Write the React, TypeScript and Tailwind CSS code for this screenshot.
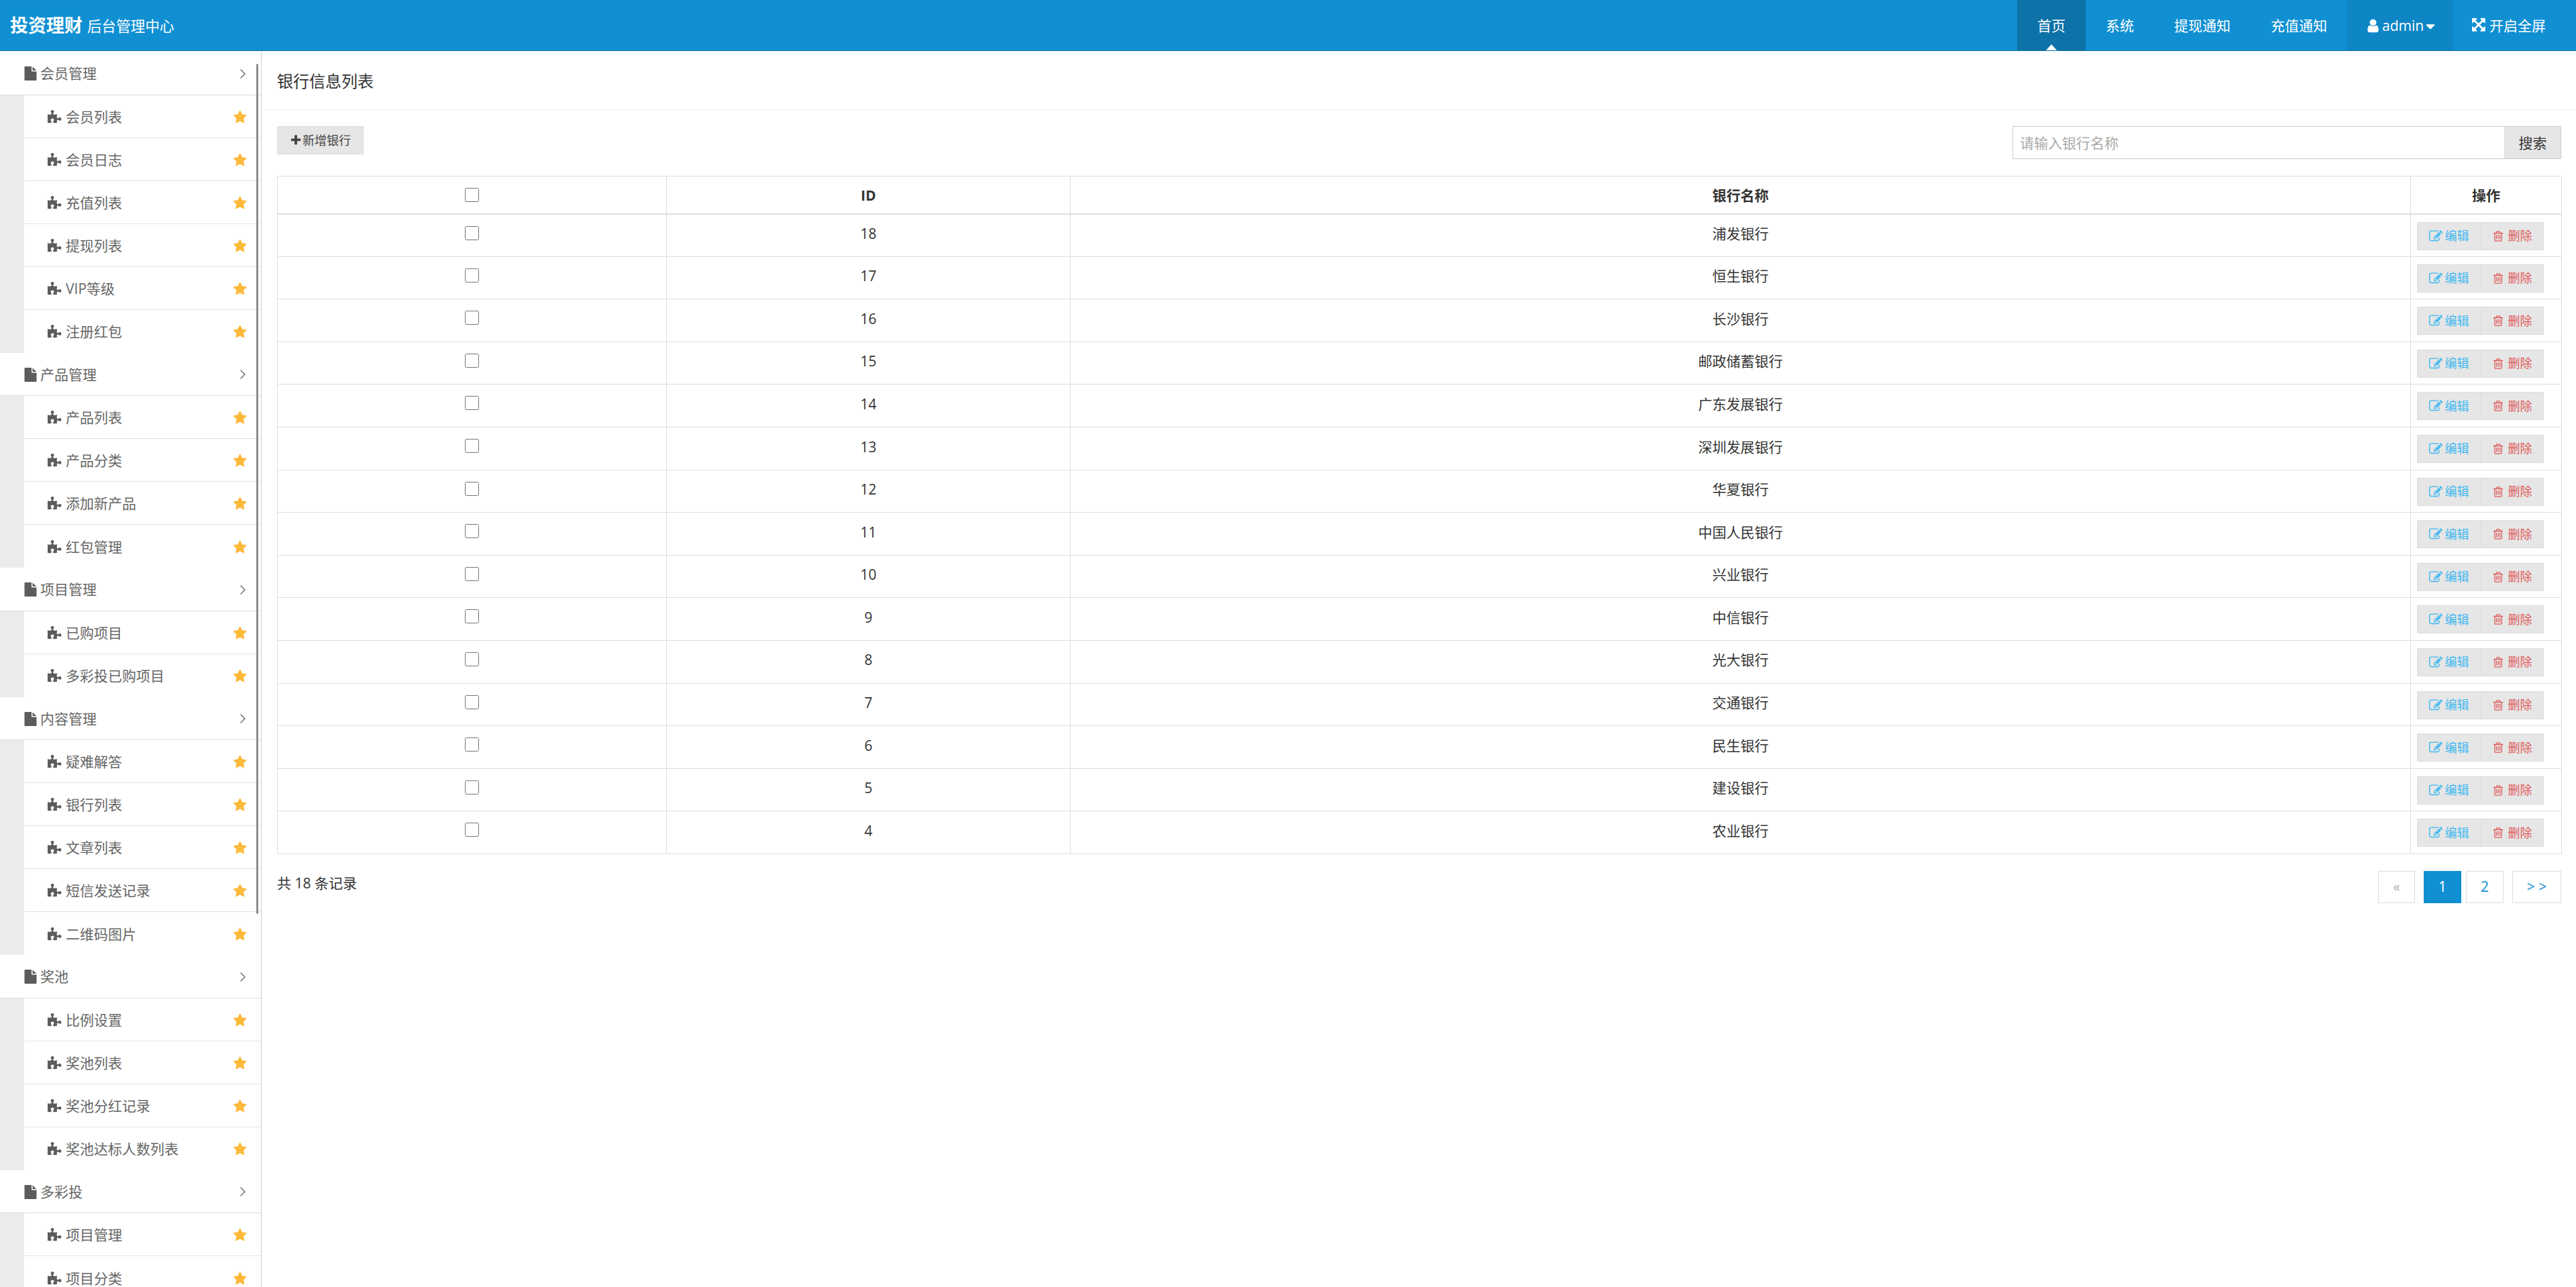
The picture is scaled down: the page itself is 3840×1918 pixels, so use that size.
import { ChevronRight } from "lucide-react";
import { FaCaretDown } from "react-icons/fa";

const fontStack = "font-['Open_Sans','Noto_Sans_CJK_SC',sans-serif]";

// font-awesome 4 glyphs, the 5 set in react-icons has different shapes
const glyphs = {
  file: "M1596 476q14 14 28 36h-472v-472q22 14 36 28zm-476 164h544v1056q0 40-28 68t-68 28h-1344q-40 0-68-28t-28-68v-1600q0-40 28-68t68-28h800v544q0 40 28 68t68 28z",
  puzzle:
    "M1664 1098q0 81-44.5 135t-123.5 54q-41 0-77.5-17.5t-59-38-56.5-38-71-17.5q-110 0-110 124 0 39 16 115t15 115v5q-22 0-33 1-34 3-97.5 11.5t-115.5 13.5-98 5q-61 0-103-26.5t-42-83.5q0-37 17.5-71t38-56.5 38-59 17.5-77.5q0-79-54-123.5t-135-44.5q-84 0-143 45.5t-59 127.5q0 43 15 83t33.5 64.5 33.5 53 15 50.5q0 45-46 89-37 35-117 35-95 0-245-24-9-2-27.5-4t-27.5-4l-13-2q-1 0-3-1-2 0-2-1v-1024q2 1 17.5 3.5t34 5 21.5 3.5q150 24 245 24 80 0 117-35 46-44 46-89 0-22-15-50.5t-33.5-53-33.5-64.5-15-83q0-82 59-127.5t144-45.5q80 0 134 44.5t54 123.5q0 41-17.5 77.5t-38 59-38 56.5-17.5 71q0 57 42 83.5t103 26.5q64 0 180-15t163-17v2q-1 2-3.5 17.5t-5 34-3.5 21.5q-24 150-24 245 0 80 35 117 44 46 89 46 22 0 50.5-15t53-33.5 64.5-33.5 83-15q82 0 127.5 59t45.5 143z",
  star: "M1728 647q0 22-26 48l-363 354 86 500q1 7 1 20 0 21-10.5 35.5t-30.5 14.5q-19 0-40-12l-449-236-449 236q-22 12-40 12-21 0-31.5-14.5t-10.5-35.5q0-6 2-20l86-500-364-354q-25-27-25-48 0-37 56-46l502-73 225-455q19-41 49-41t49 41l225 455 502 73q56 9 56 46z",
  edit: "M888 1184l116-116-152-152-116 116v56h96v96h56zm440-720q-16-16-33 1l-350 350q-17 17-1 33t33-1l350-350q17-17 1-33zm80 594v190q0 119-84.5 203.5t-203.5 84.5h-832q-119 0-203.5-84.5t-84.5-203.5v-832q0-119 84.5-203.5t203.5-84.5h832q63 0 117 25 15 7 18 23 3 17-9 29l-49 49q-14 14-32 8-23-6-45-6h-832q-66 0-113 47t-47 113v832q0 66 47 113t113 47h832q66 0 113-47t47-113v-126q0-13 9-22l64-64q15-15 35-7t20 29zm-96-738l288 288-672 672h-288v-288zm444 132l-92 92-288-288 92-92q28-28 68-28t68 28l152 152q28 28 28 68t-28 68z",
  trash:
    "M704 736v576q0 14-9 23t-23 9h-64q-14 0-23-9t-9-23v-576q0-14 9-23t23-9h64q14 0 23 9t9 23zm256 0v576q0 14-9 23t-23 9h-64q-14 0-23-9t-9-23v-576q0-14 9-23t23-9h64q14 0 23 9t9 23zm256 0v576q0 14-9 23t-23 9h-64q-14 0-23-9t-9-23v-576q0-14 9-23t23-9h64q14 0 23 9t9 23zm128 724v-948h-896v948q0 22 7 40.5t14.5 27 10.5 8.5h832q3 0 10.5-8.5t14.5-27 7-40.5zm-672-1076h448l-48-117q-7-9-17-11h-317q-10 2-17 11zm928 32v64q0 14-9 23t-23 9h-96v948q0 83-47 143.5t-113 60.5h-832q-66 0-113-58.5t-47-141.5v-952h-96q-14 0-23-9t-9-23v-64q0-14 9-23t23-9h309l70-167q15-37 54-63t79-26h320q40 0 79 26t54 63l70 167h309q14 0 23 9t9 23z",
  expand:
    "M1283 413l-355 355 355 355 144-144q29-31 70-14 39 17 39 59v448q0 26-19 45t-45 19h-448q-42 0-59-40-17-39 14-69l144-144-355-355-355 355 144 144q31 30 14 69-17 40-59 40h-448q-26 0-45-19t-19-45v-448q0-42 40-59 39-17 69 14l144 144 355-355-355-355-144 144q-19 19-45 19-12 0-24-5-40-17-40-59v-448q0-26 19-45t45-19h448q42 0 59 40 17 39-14 69l-144 144 355 355 355-355-144-144q-31-30-14-69 17-40 59-40h448q26 0 45 19t19 45v448q0 42-39 59-13 5-25 5-26 0-45-19z",
  plus: "M1600 736v192q0 40-28 68t-68 28h-416v416q0 40-28 68t-68 28h-192q-40 0-68-28t-28-68v-416h-416q-40 0-68-28t-28-68v-192q0-40 28-68t68-28h416v-416q0-40 28-68t68-28h192q40 0 68 28t28 68v416h416q40 0 68 28t28 68z",
  user: "M1536 1399q0 109-62.5 187t-150.5 78h-854q-88 0-150.5-78t-62.5-187q0-85 8.5-160.5t31.5-152 58.5-131 94-89 134.5-34.5q131 128 313 128t313-128q76 0 134.5 34.5t94 89 58.5 131 31.5 152 8.5 160.5zm-256-887q0 159-112.5 271.5t-271.5 112.5-271.5-112.5-112.5-271.5 112.5-271.5 271.5-112.5 271.5 112.5 112.5 271.5z",
};

function Fa({ name, className }: { name: keyof typeof glyphs; className: string }) {
  return (
    <svg viewBox="0 0 1792 1792" fill="currentColor" className={`shrink-0 ${className}`}>
      <path d={glyphs[name]} />
    </svg>
  );
}

const menu = [
  { title: "会员管理", items: ["会员列表", "会员日志", "充值列表", "提现列表", "VIP等级", "注册红包"] },
  { title: "产品管理", items: ["产品列表", "产品分类", "添加新产品", "红包管理"] },
  { title: "项目管理", items: ["已购项目", "多彩投已购项目"] },
  { title: "内容管理", items: ["疑难解答", "银行列表", "文章列表", "短信发送记录", "二维码图片"] },
  { title: "奖池", items: ["比例设置", "奖池列表", "奖池分红记录", "奖池达标人数列表"] },
  { title: "多彩投", items: ["项目管理", "项目分类"] },
];

const banks = [
  { id: 18, name: "浦发银行" },
  { id: 17, name: "恒生银行" },
  { id: 16, name: "长沙银行" },
  { id: 15, name: "邮政储蓄银行" },
  { id: 14, name: "广东发展银行" },
  { id: 13, name: "深圳发展银行" },
  { id: 12, name: "华夏银行" },
  { id: 11, name: "中国人民银行" },
  { id: 10, name: "兴业银行" },
  { id: 9, name: "中信银行" },
  { id: 8, name: "光大银行" },
  { id: 7, name: "交通银行" },
  { id: 6, name: "民生银行" },
  { id: 5, name: "建设银行" },
  { id: 4, name: "农业银行" },
];

function TopBar() {
  return (
    <header className="h-[76px] shrink-0 bg-[#1090d3] border-b border-[#0b6ea3] flex items-center justify-between text-white">
      <div className="flex items-center pl-[15px] pt-[2px]">
        <span className="text-[27px] font-bold">投资理财</span>
        <span className="text-[21.6px] ml-[7px] pt-[2px]">后台管理中心</span>
      </div>
      <nav className="flex h-full text-[21px]">
        <a className="relative w-[102px] pt-[2px] flex items-center justify-center bg-[#0c72a8]">
          首页
          <span className="absolute bottom-0 left-[43px] border-x-[8px] border-x-transparent border-b-[9px] border-b-white" />
        </a>
        <a className="px-[30px] pt-[2px] flex items-center">系统</a>
        <a className="px-[30px] pt-[2px] flex items-center">提现通知</a>
        <a className="px-[30px] pt-[2px] flex items-center">充值通知</a>
        <a className="pl-[27px] w-[158px] pt-[2px] flex items-center bg-[#0e86c6]">
          <Fa name="user" className="w-[23px] h-[23px] mr-[2px]" />
          admin
          <FaCaretDown className="text-[22px] -ml-[1px]" />
        </a>
        <a className="pl-[28px] w-[183px] pt-[2px] flex items-center">
          <Fa name="expand" className="w-[23px] h-[23px] mr-[3px]" />
          开启全屏
        </a>
      </nav>
    </header>
  );
}

function Sidebar() {
  return (
    <aside className="relative w-[390px] shrink-0 pt-[1px] border-r border-[#cfcfcf] overflow-hidden text-[21px] text-[#666]">
      {menu.map((group) => (
        <div key={group.title}>
          <div className="h-[64.5px] pt-[2px] border-b border-[#ddd] pl-[34.5px] pr-[24px] flex items-center">
            <Fa name="file" className="w-[21px] h-[21px] mr-[4.5px] text-[#5c5c5c]" />
            <span className="flex-1">{group.title}</span>
            <ChevronRight className="w-[24px] h-[24px] -mr-[9px] text-[#666]" strokeWidth={1.4} />
          </div>
          <ul className="bg-[#ebebeb] pl-[36px]">
            {group.items.map((item, i) => (
              <li
                key={item}
                className={`h-[64px] bg-white pt-[3px] pl-[34.5px] pr-[21px] flex items-center ${
                  i < group.items.length - 1 ? "border-b border-[#e3e3e3]" : ""
                }`}
              >
                <Fa name="puzzle" className="w-[22px] h-[22px] mr-[5.5px] text-[#5c5c5c]" />
                <span className="flex-1">{item}</span>
                <Fa name="star" className="w-[21.5px] h-[21.5px] text-[#fdb93a]" />
              </li>
            ))}
          </ul>
        </div>
      ))}
      {/* scrollbar thumb */}
      <div className="absolute left-[382px] top-[19px] w-[3px] h-[1267px] bg-[#8c8c8c] rounded-full" />
    </aside>
  );
}

function BankTable() {
  const cell = "border-x border-[#ddd]";
  return (
    <table className="w-[3405px] table-fixed border-collapse text-[21px] text-[#333] text-center">
      <colgroup>
        <col className="w-[580px]" />
        <col className="w-[602px]" />
        <col className="w-[1998px]" />
        <col className="w-[225px]" />
      </colgroup>
      <thead>
        <tr className="h-[56px] border-t border-b-2 border-[#ddd]">
          <th className={`${cell} align-top pt-[17px] font-normal`}>
            <input type="checkbox" className="w-[21px] h-[21px] block mx-auto" />
          </th>
          <th className={`${cell} pt-[2px] font-bold`}>ID</th>
          <th className={`${cell} pt-[2px] font-bold`}>银行名称</th>
          <th className={`${cell} pt-[2px] font-bold`}>操作</th>
        </tr>
      </thead>
      <tbody>
        {banks.map((b) => (
          <tr key={b.id} className="h-[63.6px] border-b border-[#ddd]">
            <td className={`${cell} align-top pt-[17px]`}>
              <input type="checkbox" className="w-[21px] h-[21px] block mx-auto" />
            </td>
            <td className={`${cell} pb-[4px]`}>{b.id}</td>
            <td className={`${cell} pb-[4px]`}>{b.name}</td>
            <td className={`${cell} pl-[9px] align-top pt-[11px]`}>
              <div className="w-[189px] h-[42px] flex bg-[#e6e6e6] border border-[#ddd] text-[18px]">
                <span className="w-[94px] border-r border-[#ddd] flex items-center justify-center text-[#3fb8f1]">
                  <Fa name="edit" className="w-[20px] h-[20px] mr-[4px]" />
                  编辑
                </span>
                <span className="flex-1 flex items-center justify-center text-[#e05a5a]">
                  <Fa name="trash" className="w-[18px] h-[18px] mr-[6px]" />
                  删除
                </span>
              </div>
            </td>
          </tr>
        ))}
      </tbody>
    </table>
  );
}

function Pager() {
  const cell = "h-[48px] border border-[#ddd] flex items-center justify-center text-[#1090d3]";
  return (
    <div className="flex text-[21px]">
      <a className={`${cell} w-[55px] text-[#aaa] mr-[13px]`}>«</a>
      <a className="h-[48px] w-[56px] flex items-center justify-center bg-[#1090d3] text-white mr-[7px]">1</a>
      <a className={`${cell} w-[56px] mr-[13px]`}>2</a>
      <a className={`${cell} w-[73px]`}>&gt; &gt;</a>
    </div>
  );
}

export default function App() {
  return (
    <div className={`h-[1918px] w-[3840px] flex flex-col overflow-hidden bg-white ${fontStack}`}>
      <TopBar />
      <div className="flex flex-1 min-h-0">
        <Sidebar />
        <main className="flex-1 min-w-0">
          <div className="h-[88px] border-b border-[#eee] pl-[23px] pt-[27px] text-[24px] leading-[36px] text-[#333]">
            银行信息列表
          </div>
          <div className="pl-[23px] pr-[22px] pt-[24px]">
            <div className="flex justify-between items-start h-[74px]">
              <button className="h-[42px] w-[129px] bg-[#e6e6e6] border border-[#ddd] text-[18px] text-[#444] flex items-center justify-center">
                <Fa name="plus" className="w-[18px] h-[18px] mr-[1px]" />
                新增银行
              </button>
              <div className="flex h-[49px] w-[818px] border border-[#ccc] text-[21px]">
                <input
                  placeholder="请输入银行名称"
                  className="flex-1 min-w-0 px-[10px] pt-[2px] outline-none placeholder:text-[#aaa]"
                />
                <span className="w-[84px] pt-[2px] bg-[#e6e6e6] border-l border-[#ddd] flex items-center justify-center text-[#333]">
                  搜索
                </span>
              </div>
            </div>
            <BankTable />
            <div className="flex justify-between items-start mt-[25px]">
              <span className="text-[21px] text-[#333] leading-[36px]">共 18 条记录</span>
              <Pager />
            </div>
          </div>
        </main>
      </div>
    </div>
  );
}
